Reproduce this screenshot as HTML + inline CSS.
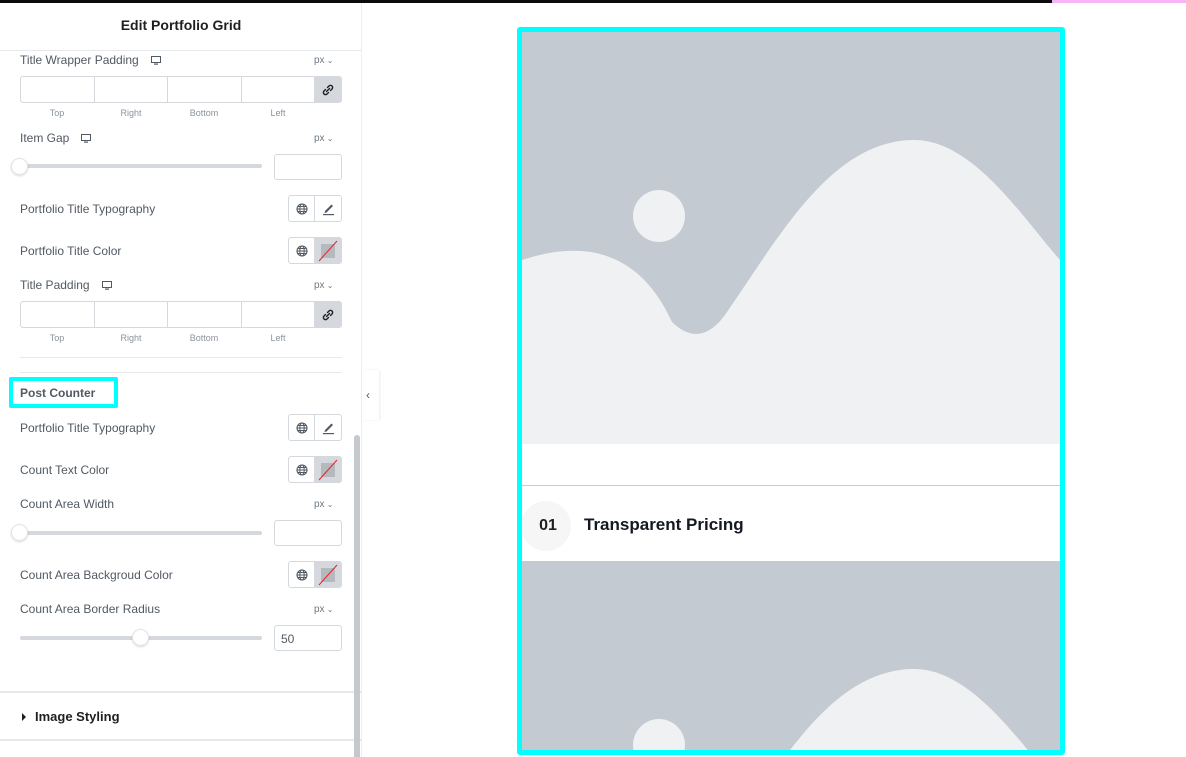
<!DOCTYPE html>
<html><head><meta charset="utf-8"><style>
*{box-sizing:border-box;margin:0;padding:0}
html,body{width:1186px;height:757px;overflow:hidden}
body{background:#fff;font-family:"Liberation Sans",Arial,sans-serif;position:relative}
.a{position:absolute}
.lbl{position:absolute;left:20px;font-size:12px;color:#515962}
.px{position:absolute;left:314px;font-size:10px;color:#6d7882}
.px:after{content:" \2304";font-size:8px}
.dim{position:absolute;left:20px;width:322px;height:27px;border:1px solid #d5d8dc;border-radius:3px;display:flex;overflow:hidden}
.dim div{width:73.5px;border-right:1px solid #d5d8dc}
.dim .lk{flex:1;border:0;background:#d5d8dc;display:flex;align-items:center;justify-content:center}
.sub{position:absolute;font-size:9px;color:#8b939b;width:74px;text-align:center}
.track{position:absolute;left:20px;width:242px;height:4px;background:#d5d8dc;border-radius:2px}
.knob{position:absolute;width:17px;height:17px;border-radius:50%;background:#fff;border:1px solid #e2e4e7;box-shadow:0 1px 2px rgba(0,0,0,.15)}
.inp{position:absolute;left:274px;width:68px;height:26px;border:1px solid #d5d8dc;border-radius:3px;font-size:12px;color:#515962;padding:6px 6px}
.btns{position:absolute;left:288px;width:54px;height:27px;border:1px solid #d5d8dc;border-radius:3px;display:flex;overflow:hidden}
.btns div{width:27px;display:flex;align-items:center;justify-content:center}
.btns div:first-child{border-right:1px solid #d5d8dc}
.sw{background:#d5d8dc}
.mon{display:inline-block;vertical-align:middle;margin-left:12px}
</style></head><body>
<div class="a" style="left:0;top:0;width:1186px;height:3px;background:#0b0b0d"></div>
<div class="a" style="left:1052px;top:0;width:134px;height:3px;background:#f5b4f6"></div>
<div class="a" style="left:0;top:3px;width:362px;height:754px;background:#fff;border-right:1px solid #eceef0"></div>
<div class="a" style="left:0;top:17px;width:362px;text-align:center;font-size:14px;font-weight:bold;color:#1e1f21">Edit Portfolio Grid</div>
<div class="a" style="left:0;top:50px;width:362px;height:1px;background:#e6e8ea"></div>

<svg width="0" height="0" style="position:absolute;left:0;top:0"><defs>
<g id="mn"><rect x="0.5" y="0.5" width="9" height="6" fill="none" stroke="#515962"/><rect x="3" y="7.5" width="4" height="1.2" fill="#515962"/></g>
<g id="gl"><circle cx="6" cy="6" r="5" fill="none" stroke="#515962" stroke-width="1.1"/><ellipse cx="6" cy="6" rx="2.2" ry="5" fill="none" stroke="#515962" stroke-width="1"/><path d="M1 6H11M1.8 3.5H10.2M1.8 8.5H10.2" stroke="#515962" stroke-width="1"/></g>
<g id="pn"><path d="M3 9L9.5 2.5L11 4L4.5 10.5L2.5 11Z" fill="#515962"/><rect x="1" y="12" width="11" height="1.2" fill="#515962"/></g>
<g id="lkk"><path d="M5.5 3.5L7 2a2 2 0 0 1 3 3L8.5 6.5M6.5 8.5L5 10a2 2 0 0 1-3-3L3.5 5.5M4.5 7.5L7.5 4.5" fill="none" stroke="#1e1f21" stroke-width="1.4" stroke-linecap="round"/></g>
<g id="nc"><rect x="0" y="0" width="14" height="14" fill="#b5b8bc"/><path d="M-2 17L16 -3" stroke="#e3262d" stroke-width="1"/></g>
</defs></svg>

<div class="lbl" style="top:53px">Title Wrapper Padding<svg class="mon" width="10" height="9"><use href="#mn"/></svg></div>
<div class="px" style="top:55px">px</div>
<div class="dim" style="top:76px"><div></div><div></div><div></div><div></div><div class="lk"><svg width="12" height="12"><use href="#lkk"/></svg></div></div>
<div class="sub" style="left:20px;top:108px">Top</div><div class="sub" style="left:94px;top:108px">Right</div><div class="sub" style="left:167px;top:108px">Bottom</div><div class="sub" style="left:241px;top:108px">Left</div>

<div class="lbl" style="top:131px">Item Gap<svg class="mon" width="10" height="9"><use href="#mn"/></svg></div>
<div class="px" style="top:133px">px</div>
<div class="track" style="top:164px"></div><div class="knob" style="left:11px;top:158px"></div>
<div class="inp" style="top:154px"></div>

<div class="lbl" style="top:202px">Portfolio Title Typography</div>
<div class="btns" style="top:195px"><div><svg width="12" height="12"><use href="#gl"/></svg></div><div><svg width="13" height="14"><use href="#pn"/></svg></div></div>
<div class="lbl" style="top:244px">Portfolio Title Color</div>
<div class="btns" style="top:237px"><div><svg width="12" height="12"><use href="#gl"/></svg></div><div class="sw"><svg width="14" height="14" overflow="visible"><use href="#nc"/></svg></div></div>

<div class="lbl" style="top:278px">Title Padding<svg class="mon" width="10" height="9"><use href="#mn"/></svg></div>
<div class="px" style="top:280px">px</div>
<div class="dim" style="top:301px"><div></div><div></div><div></div><div></div><div class="lk"><svg width="12" height="12"><use href="#lkk"/></svg></div></div>
<div class="sub" style="left:20px;top:333px">Top</div><div class="sub" style="left:94px;top:333px">Right</div><div class="sub" style="left:167px;top:333px">Bottom</div><div class="sub" style="left:241px;top:333px">Left</div>

<div class="a" style="left:20px;top:357px;width:322px;height:1px;background:#e6e8ea"></div>
<div class="a" style="left:20px;top:372px;width:322px;height:1px;background:#e6e8ea"></div>
<div class="a" style="left:9px;top:377px;width:109px;height:31px;border:4px solid #00ffff;border-radius:2px"></div>
<div class="a" style="left:20px;top:386px;font-size:12px;font-weight:bold;color:#515962">Post Counter</div>

<div class="lbl" style="top:421px">Portfolio Title Typography</div>
<div class="btns" style="top:414px"><div><svg width="12" height="12"><use href="#gl"/></svg></div><div><svg width="13" height="14"><use href="#pn"/></svg></div></div>
<div class="lbl" style="top:463px">Count Text Color</div>
<div class="btns" style="top:456px"><div><svg width="12" height="12"><use href="#gl"/></svg></div><div class="sw"><svg width="14" height="14" overflow="visible"><use href="#nc"/></svg></div></div>
<div class="lbl" style="top:497px">Count Area Width</div>
<div class="px" style="top:499px">px</div>
<div class="track" style="top:531px"></div><div class="knob" style="left:11px;top:524px"></div>
<div class="inp" style="top:520px"></div>
<div class="lbl" style="top:568px">Count Area Backgroud Color</div>
<div class="btns" style="top:561px"><div><svg width="12" height="12"><use href="#gl"/></svg></div><div class="sw"><svg width="14" height="14" overflow="visible"><use href="#nc"/></svg></div></div>
<div class="lbl" style="top:602px">Count Area Border Radius</div>
<div class="px" style="top:604px">px</div>
<div class="track" style="top:636px"></div><div class="knob" style="left:132px;top:629px"></div>
<div class="inp" style="top:625px">50</div>

<div class="a" style="left:0;top:691px;width:362px;height:2px;background:#e6e8ea"></div>
<div class="a" style="left:22px;top:713px;width:0;height:0;border-left:4px solid #1e1f21;border-top:4px solid transparent;border-bottom:4px solid transparent"></div>
<div class="a" style="left:35px;top:709px;font-size:13px;font-weight:bold;color:#1e1f21">Image Styling</div>
<div class="a" style="left:0;top:739px;width:362px;height:2px;background:#e6e8ea"></div>
<div class="a" style="left:354px;top:435px;width:6px;height:322px;background:#c5c8cc;border-radius:3px 3px 0 0"></div>
<div class="a" style="left:362px;top:370px;width:17px;height:50px;background:#fff;box-shadow:1px 0 2px rgba(0,0,0,.08)"></div>
<div class="a" style="left:366px;top:388px;font-size:12px;color:#515962">‹</div>

<div class="a" style="left:517px;top:27px;width:548px;height:728px;border:5px solid #00ffff;border-radius:3px;overflow:hidden;background:#fff">
 <svg class="a" style="left:0;top:0" width="538" height="412"><rect width="538" height="412" fill="#c4cad2"/><path d="M0,228 C70,205 120,225 150,290 C165,305 185,310 205,280 C260,200 310,110 390,108 C450,106 500,185 538,228 L538,412 L0,412Z" fill="#f0f1f3"/><circle cx="137" cy="184" r="26" fill="#f0f1f3"/></svg>
 <div class="a" style="left:0;top:453px;width:538px;height:1px;background:#c9cbcd"></div>
 <div class="a" style="left:-1px;top:469px;width:50px;height:50px;border-radius:50%;background:#f6f6f6;font-size:16px;font-weight:bold;color:#1e1f21;text-align:center;line-height:50px;padding-left:4px">01</div>
 <div class="a" style="left:62px;top:483px;font-size:17px;font-weight:bold;color:#141820">Transparent Pricing</div>
 <svg class="a" style="left:0;top:529px" width="538" height="190"><rect width="538" height="190" fill="#c4cad2"/><path d="M0,228 C70,205 120,225 150,290 C165,305 185,310 205,280 C260,200 310,110 390,108 C450,106 500,185 538,228 L538,412 L0,412Z" fill="#f0f1f3"/><circle cx="137" cy="184" r="26" fill="#f0f1f3"/></svg>
</div>
</body></html>
